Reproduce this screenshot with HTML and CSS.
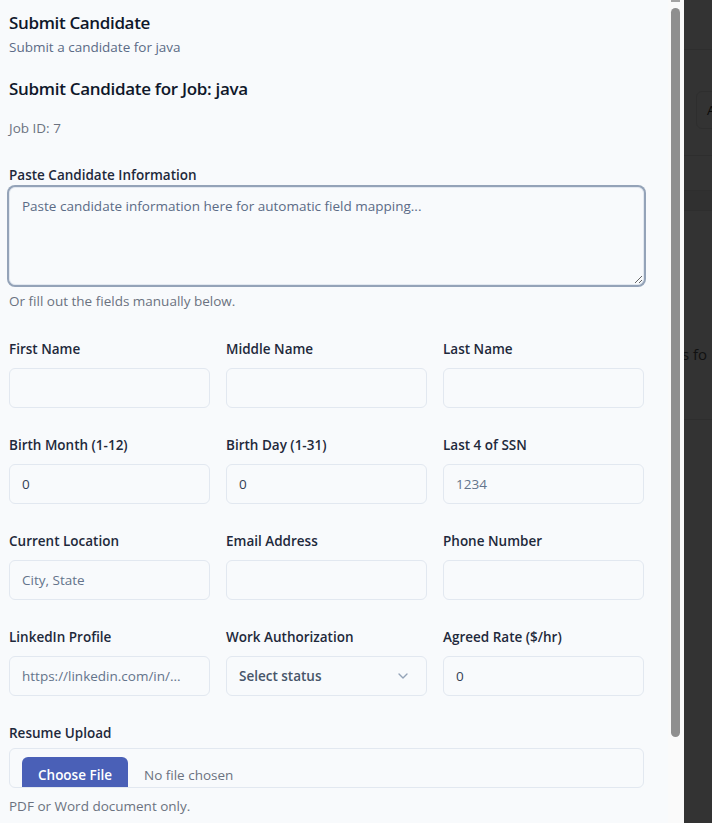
FILE: index.html
```html
<!DOCTYPE html>
<html lang="en">
<head>
<meta charset="utf-8">
<title>Submit Candidate</title>
<link rel="stylesheet" href="styles.css">
</head>
<body>
<div class="app">
  <aside class="sheet">
    <div class="sheet-body">
      <header class="sheet-header">
        <h2 class="sheet-title">Submit Candidate</h2>
        <p class="sheet-desc">Submit a candidate for java</p>
      </header>
      <h3 class="job-title">Submit Candidate for Job: java</h3>
      <p class="job-id">Job ID: 7</p>
      <form class="form">
        <div class="paste">
          <label class="label">Paste Candidate Information</label>
          <textarea class="textarea" placeholder="Paste candidate information here for automatic field mapping..."></textarea>
          <p class="hint hint-paste">Or fill out the fields manually below.</p>
        </div>
        <div class="grid">
          <div class="field"><label class="label">First Name</label><input class="input" type="text"></div>
          <div class="field"><label class="label">Middle Name</label><input class="input" type="text"></div>
          <div class="field"><label class="label">Last Name</label><input class="input" type="text"></div>
          <div class="field"><label class="label">Birth Month (1-12)</label><input class="input" type="text" value="0"></div>
          <div class="field"><label class="label">Birth Day (1-31)</label><input class="input" type="text" value="0"></div>
          <div class="field"><label class="label">Last 4 of SSN</label><input class="input" type="text" placeholder="1234"></div>
          <div class="field"><label class="label">Current Location</label><input class="input" type="text" placeholder="City, State"></div>
          <div class="field"><label class="label">Email Address</label><input class="input" type="text"></div>
          <div class="field"><label class="label">Phone Number</label><input class="input" type="text"></div>
          <div class="field"><label class="label">LinkedIn Profile</label><input class="input" type="text" placeholder="https://linkedin.com/in/..."></div>
          <div class="field"><label class="label">Work Authorization</label>
            <button type="button" class="select"><span>Select status</span>
              <svg class="chev" width="16" height="16" viewBox="0 0 24 24" fill="none" stroke="currentColor" stroke-width="2" stroke-linecap="round" stroke-linejoin="round"><path d="m6 9 6 6 6-6"/></svg>
            </button>
          </div>
          <div class="field"><label class="label">Agreed Rate ($/hr)</label><input class="input" type="text" value="0"></div>
        </div>
        <div class="resume">
          <label class="label">Resume Upload</label>
          <div class="file">
            <span class="file-btn">Choose File</span>
            <span class="file-name">No file chosen</span>
          </div>
          <p class="hint hint-file">PDF or Word document only.</p>
        </div>
      </form>
    </div>
    <div class="scrollbar"><div class="scrollbar-cap"></div><div class="scrollbar-thumb"></div></div>
  </aside>
  <div class="backdrop">
    <div class="bd-top"></div>
    <div class="bd-toolbar"><span class="bd-btn">A</span></div>
    <div class="bd-rule"></div>
    <div class="bd-band"></div>
    <div class="bd-text">s fo</div>
    <div class="bd-rule2"></div>
  </div>
</div>
</body>
</html>
```

FILE: styles.css
```css
* { box-sizing: border-box; }
html, body { margin: 0; padding: 0; height: 100%; overflow: hidden; }
body {
  font-family: "Open Sans", "Noto Sans", sans-serif;
  font-size: 13.5px;
  line-height: 20px;
  color: #0f172a;
  background: #333333;
}
.app { display: flex; height: 823px; }

.sheet {
  width: 684px;
  height: 823px;
  flex: none;
  display: flex;
  background: #f8fafc;
}
.sheet-body {
  flex: 1;
  min-width: 0;
  overflow: hidden;
  padding: 9px 24px 0 9px;
}
.scrollbar {
  width: 16px;
  flex: none;
  background: #fafafa;
  padding: 0 4px 0 3px;
}
.scrollbar-cap {
  height: 2px;
  margin-bottom: 6px;
  background: #a3a3a3;
}
.scrollbar-thumb {
  height: 729px;
  background: #8f8f8f;
  border-radius: 5px;
}

.sheet-title { margin: 0; font-size: 17px; line-height: 28px; font-weight: 600; letter-spacing: -0.35px; color: #0f172a; }
.sheet-desc { margin: 0; color: #5b6b86; }
.job-title { margin: 18px 0 0; font-size: 17px; line-height: 28px; font-weight: 600; letter-spacing: -0.3px; color: #0f172a; }
.job-id { margin: 15px 0 0; color: #6b7280; }

.form { margin: 0; }
.paste { margin-top: 27px; }
.label { display: block; font-weight: 600; color: #1e293b; }
.textarea {
  display: block;
  width: 100%;
  height: 98px;
  margin-top: 2px;
  padding: 8px 12px;
  border: 1px solid #e2e8f0;
  border-radius: 6px;
  box-shadow: 0 0 0 2px #94a3b8;
  background: #f8fafc;
  font: inherit;
  color: #0f172a;
  resize: vertical;
  outline: none;
}
.textarea::placeholder { color: #5b6b86; }
.hint { margin: 0; color: #6b7280; }
.hint-paste { margin-top: 6px; }

.grid {
  margin-top: 28px;
  display: grid;
  grid-template-columns: repeat(3, 1fr);
  column-gap: 16px;
  row-gap: 27px;
}
.field { display: flex; flex-direction: column; gap: 9px; }
.input, .select {
  height: 40px;
  width: 100%;
  padding: 0 12px;
  border: 1px solid #e2e8f0;
  border-radius: 6px;
  background: #f8fafc;
  font: inherit;
  color: #334155;
  outline: none;
}
.input::placeholder { color: #64748b; }
.select {
  display: flex;
  align-items: center;
  justify-content: space-between;
  text-align: left;
  font-weight: 600;
  color: #475569;
  cursor: pointer;
}
.chev { color: #94a3b8; margin-right: 3px; }

.resume { margin-top: 27px; }
.file {
  margin-top: 5px;
  height: 40px;
  border: 1px solid #e2e8f0;
  border-radius: 6px;
  overflow: hidden;
  display: flex;
  align-items: flex-start;
  padding: 8px 12px 0;
  background: #f8fafc;
}
.file-btn {
  height: 36px;
  line-height: 36px;
  padding: 0 16px;
  background: #4a60b7;
  color: #ffffff;
  font-weight: 600;
  border-radius: 6px;
}
.file-name { margin-left: 16px; line-height: 36px; color: #6b7280; }
.hint-file { margin-top: 8px; }

.backdrop { flex: 1; overflow: hidden; background: #333333; display: flex; flex-direction: column; }
.bd-top { height: 50px; border-bottom: 1px solid #2e2e2e; flex: none; }
.bd-toolbar { height: 106px; border-bottom: 1px solid #2e2e2e; padding-top: 41px; padding-left: 12px; flex: none; }
.bd-btn {
  display: block;
  width: 40px;
  height: 38px;
  border: 1px solid #2e2e2e;
  border-radius: 6px;
  padding-left: 10px;
  line-height: 36px;
  color: #0a0a0a;
  font-weight: 500;
}
.bd-rule { height: 35px; flex: none; border-bottom: 1px solid #2e2e2e; }
.bd-band { height: 20px; flex: none; background: #303030; border-bottom: 1px solid #2e2e2e; }
.bd-text { margin-top: 133px; margin-left: -2px; white-space: nowrap; color: #111111; font-size: 15px; line-height: 20px; flex: none; }
.bd-rule2 { margin-top: 55px; border-bottom: 1px solid #2e2e2e; flex: none; }
```
